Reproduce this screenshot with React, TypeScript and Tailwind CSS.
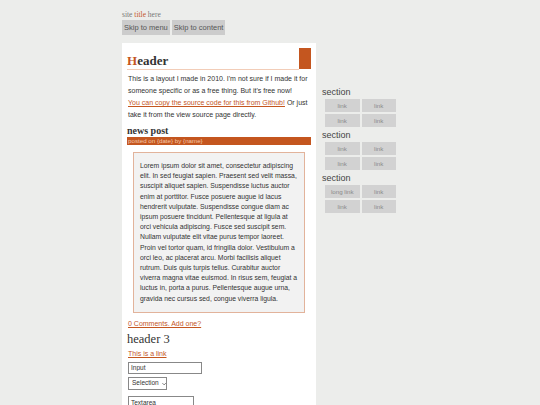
export default function App() {
  const sections = [
    ['link', 'link', 'link', 'link'],
    ['link', 'link', 'link', 'link'],
    ['long link', 'link', 'link', 'link'],
  ]

  return (
    <div className="min-h-[405px] bg-[#ecedeb] font-['Liberation_Sans',Arial,sans-serif] text-[#333]">
      <div className="pl-[122px] pt-[11px] flex gap-[6px]">
        {/* main column */}
        <div className="w-[194px] flex flex-col">
          <div className="text-[7.5px] leading-[8px] font-['Liberation_Serif',serif] text-[#777]">
            site <span className="text-[#c4561f]">title</span> here
          </div>
          <div className="flex gap-[2px] mt-[1px]">
            <button className="bg-[#cccccc] text-[#555] text-[7.5px] px-[2px] h-[15px]">Skip to menu</button>
            <button className="bg-[#cccccc] text-[#555] text-[7.5px] px-[2px] h-[15px]">Skip to content</button>
          </div>

          <div className="bg-white mt-[8px] px-[5px] pt-[5px] pb-[20px] min-h-[362px]">
            {/* header */}
            <div className="flex items-stretch">
              <h1 className="flex-1 border-b border-[#f2cdb8] font-['Liberation_Serif',serif] font-bold text-[13px] leading-[15px] pt-[5px] pb-[1px] text-[#333]">
                <span className="text-[#c4561f]">H</span>eader
              </h1>
              <div className="w-[12px] h-[21px] bg-[#c4561f]" />
            </div>

            <div className="px-[1px] text-[7px] leading-[12px] text-[#333]">
              <p className="mt-[3px]">
                This is a layout I made in 2010. I'm not sure if I made it for someone specific or as a free thing. But it's free now!
              </p>
              <p>
                <a className="text-[#c4561f] underline">You can copy the source code for this from Github!</a> Or just take it from the view source page directly.
              </p>
            </div>

            <h2 className="mt-[4px] font-['Liberation_Serif',serif] font-bold text-[10px] leading-[12px] text-[#333]">news post</h2>
            <div className="bg-[#c4561f] text-[#f6c9aa] text-[6.2px] leading-[8px] px-[1px]">
              posted on {'{date}'} by {'{name}'}
            </div>

            <div className="mx-[6px] mt-[7px] border border-[#e2b39b] bg-[#f2f2f2] px-[6px] pt-[8px] pb-[8px]">
              <p className="text-[6.8px] leading-[10.2px] text-[#333]">
                Lorem ipsum dolor sit amet, consectetur adipiscing elit. In sed feugiat sapien. Praesent sed velit massa, suscipit aliquet sapien. Suspendisse luctus auctor enim at porttitor. Fusce posuere augue id lacus hendrerit vulputate. Suspendisse congue diam ac ipsum posuere tincidunt. Pellentesque at ligula at orci vehicula adipiscing. Fusce sed suscipit sem. Nullam vulputate elit vitae purus tempor laoreet. Proin vel tortor quam, id fringilla dolor. Vestibulum a orci leo, ac placerat arcu. Morbi facilisis aliquet rutrum. Duis quis turpis tellus. Curabitur auctor viverra magna vitae euismod. In risus sem, feugiat a luctus in, porta a purus. Pellentesque augue urna, gravida nec cursus sed, congue viverra ligula.
              </p>
            </div>

            <div className="mt-[6px] px-[1px] text-[7px] leading-[10px]">
              <a className="text-[#c4561f] underline">0 Comments. Add one?</a>
            </div>

            <h3 className="mt-[3px] font-['Liberation_Serif',serif] text-[12.5px] leading-[15px] text-[#333]">header 3</h3>
            <div className="mt-[2px] px-[1px] text-[7px] leading-[10px]">
              <a className="text-[#c4561f] underline">This is a link</a>
            </div>

            <div className="mt-[3px] px-[1px] flex flex-col items-start gap-[3px]">
              <input
                className="w-[74px] h-[12px] border border-[#888] bg-white text-[6.5px] px-[2px] text-[#333]"
                defaultValue="Input"
              />
              <div className="w-[39px] h-[13px] border border-[#888] bg-white text-[6.5px] pl-[3px] flex items-center gap-[3px] text-[#333]">
                <span>Selection</span>
                <svg width="5" height="4" viewBox="0 0 10 6" className="mt-[1px]">
                  <path d="M1 1l4 4 4-4" fill="none" stroke="#333" strokeWidth="1.5" />
                </svg>
              </div>
              <div className="w-[66px] h-[14px] mt-[3px] border border-[#888] bg-white text-[6.5px] px-[2px] pt-[1px] text-[#333]">
                Textarea
              </div>
            </div>
          </div>
        </div>

        {/* sidebar */}
        <div className="w-[90px] pt-[76px] flex flex-col">
          {sections.map((links, i) => (
            <div key={i} className="mb-[3px]">
              <div className="text-[9px] leading-[11px] text-[#444]">section</div>
              <div className="grid grid-cols-2 gap-[2px] w-[71px] mt-[1px] ml-[3px]">
                {links.map((l, j) => (
                  <div key={j} className="bg-[#d2d2d2] h-[13px] flex items-center justify-center text-[6.2px] text-[#8a8a8a]">
                    {l}
                  </div>
                ))}
              </div>
            </div>
          ))}
        </div>
      </div>
    </div>
  )
}
